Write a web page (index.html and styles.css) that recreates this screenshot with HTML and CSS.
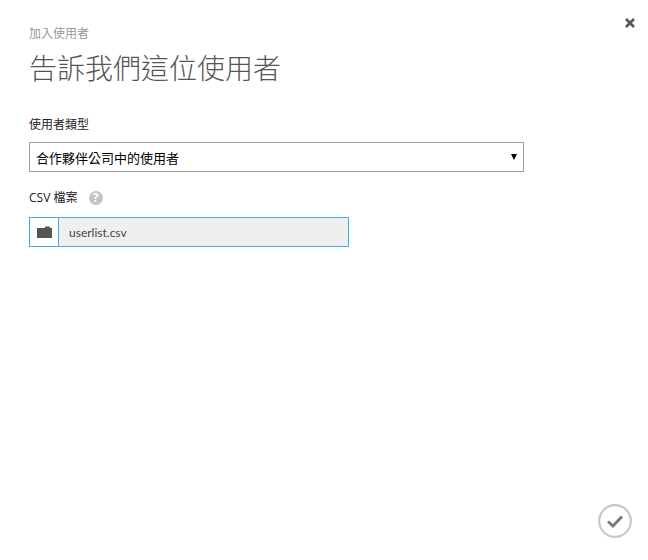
FILE: index.html
```html
<!DOCTYPE html>
<html lang="zh-Hant">
<head>
    <meta charset="UTF-8">
    <title>加入使用者</title>
    <link rel="stylesheet" href="styles.css">
</head>
<body>
    <div class="dialog">
        <button class="btn-close" type="button" aria-label="關閉">
            <svg width="10" height="10" viewBox="0 0 10 10"><path d="M1 1 L9 9 M9 1 L1 9" stroke="#555" stroke-width="2.6" fill="none"/></svg>
        </button>

        <div class="dialog-subtitle">加入使用者</div>
        <h1>告訴我們這位使用者</h1>

        <div class="form-group">
            <label class="field-label">使用者類型</label>
            <div class="select-box">
                <span>合作夥伴公司中的使用者</span>
                <span class="select-arrow"></span>
            </div>
        </div>

        <div class="form-group">
            <label class="field-label file-label">CSV 檔案 <span class="help-icon">?</span></label>
            <div class="file-box">
                <span class="file-btn">
                    <svg width="15" height="12" viewBox="0 0 15 12"><path d="M0 2 H8 V0.5 H13 V2 H15 V12 H0 Z" fill="#555"/></svg>
                </span>
                <span class="file-name">userlist.csv</span>
            </div>
        </div>

        <button class="btn-ok" type="button" aria-label="確定">
            <svg width="34" height="34" viewBox="0 0 34 34">
                <circle cx="17" cy="17" r="15.8" fill="none" stroke="#c8c8c8" stroke-width="2.2"/>
                <path d="M10 17.5 L15 22 L24 12.5" fill="none" stroke="#777" stroke-width="2.8"/>
            </svg>
        </button>
    </div>
</body>
</html>
```

FILE: styles.css
```css
body {
    margin: 0;
    background-color: #fff;
    font-family: "Open Sans", "Noto Sans CJK TC", sans-serif;
}
.dialog {
    position: relative;
    height: 560px;
    padding: 26px 0 0 29px;
    box-sizing: border-box;
    overflow: hidden;
}
.dialog-subtitle {
    font-size: 12px;
    line-height: 16px;
    color: #999;
}
h1 {
    margin: 6px 0 28px;
    font-size: 28px;
    line-height: 40px;
    font-weight: 200;
    color: #555;
}
.form-group {
    margin-bottom: 17px;
}
.field-label {
    display: block;
    margin-bottom: 9px;
    font-size: 12px;
    line-height: 17px;
    color: #222;
}
.file-label {
    margin-bottom: 11px;
}
.help-icon {
    display: inline-block;
    width: 14px;
    height: 14px;
    margin-left: 8px;
    border-radius: 50%;
    background-color: #c4c4c4;
    color: #fff;
    font-size: 12px;
    font-weight: 700;
    line-height: 14px;
    text-align: center;
}
.select-box {
    display: flex;
    align-items: center;
    justify-content: space-between;
    width: 495px;
    height: 30px;
    padding: 0 6px;
    box-sizing: border-box;
    border: 1px solid #a0a0a0;
    font-size: 13px;
    color: #000;
}
.select-arrow {
    width: 0;
    height: 0;
    margin-bottom: 1px;
    border-left: 3px solid transparent;
    border-right: 3px solid transparent;
    border-top: 6px solid #000;
}
.file-box {
    display: flex;
    width: 320px;
    height: 30px;
    box-sizing: border-box;
    border: 1px solid #41a9f0;
}
.file-btn {
    display: flex;
    align-items: center;
    justify-content: center;
    width: 28px;
    border-right: 1px solid #41a9f0;
}
.file-name {
    flex: 1;
    padding-left: 10px;
    background-color: #efefef;
    font-family: Lato, sans-serif;
    font-size: 12px;
    line-height: 30px;
    color: #444;
}
.btn-close, .btn-ok {
    position: absolute;
    padding: 0;
    border: none;
    background: none;
    cursor: pointer;
}
.btn-close {
    top: 16px;
    left: 625px;
    width: 10px;
    height: 10px;
}
.btn-ok {
    top: 504px;
    left: 598px;
    width: 34px;
    height: 34px;
}
```
